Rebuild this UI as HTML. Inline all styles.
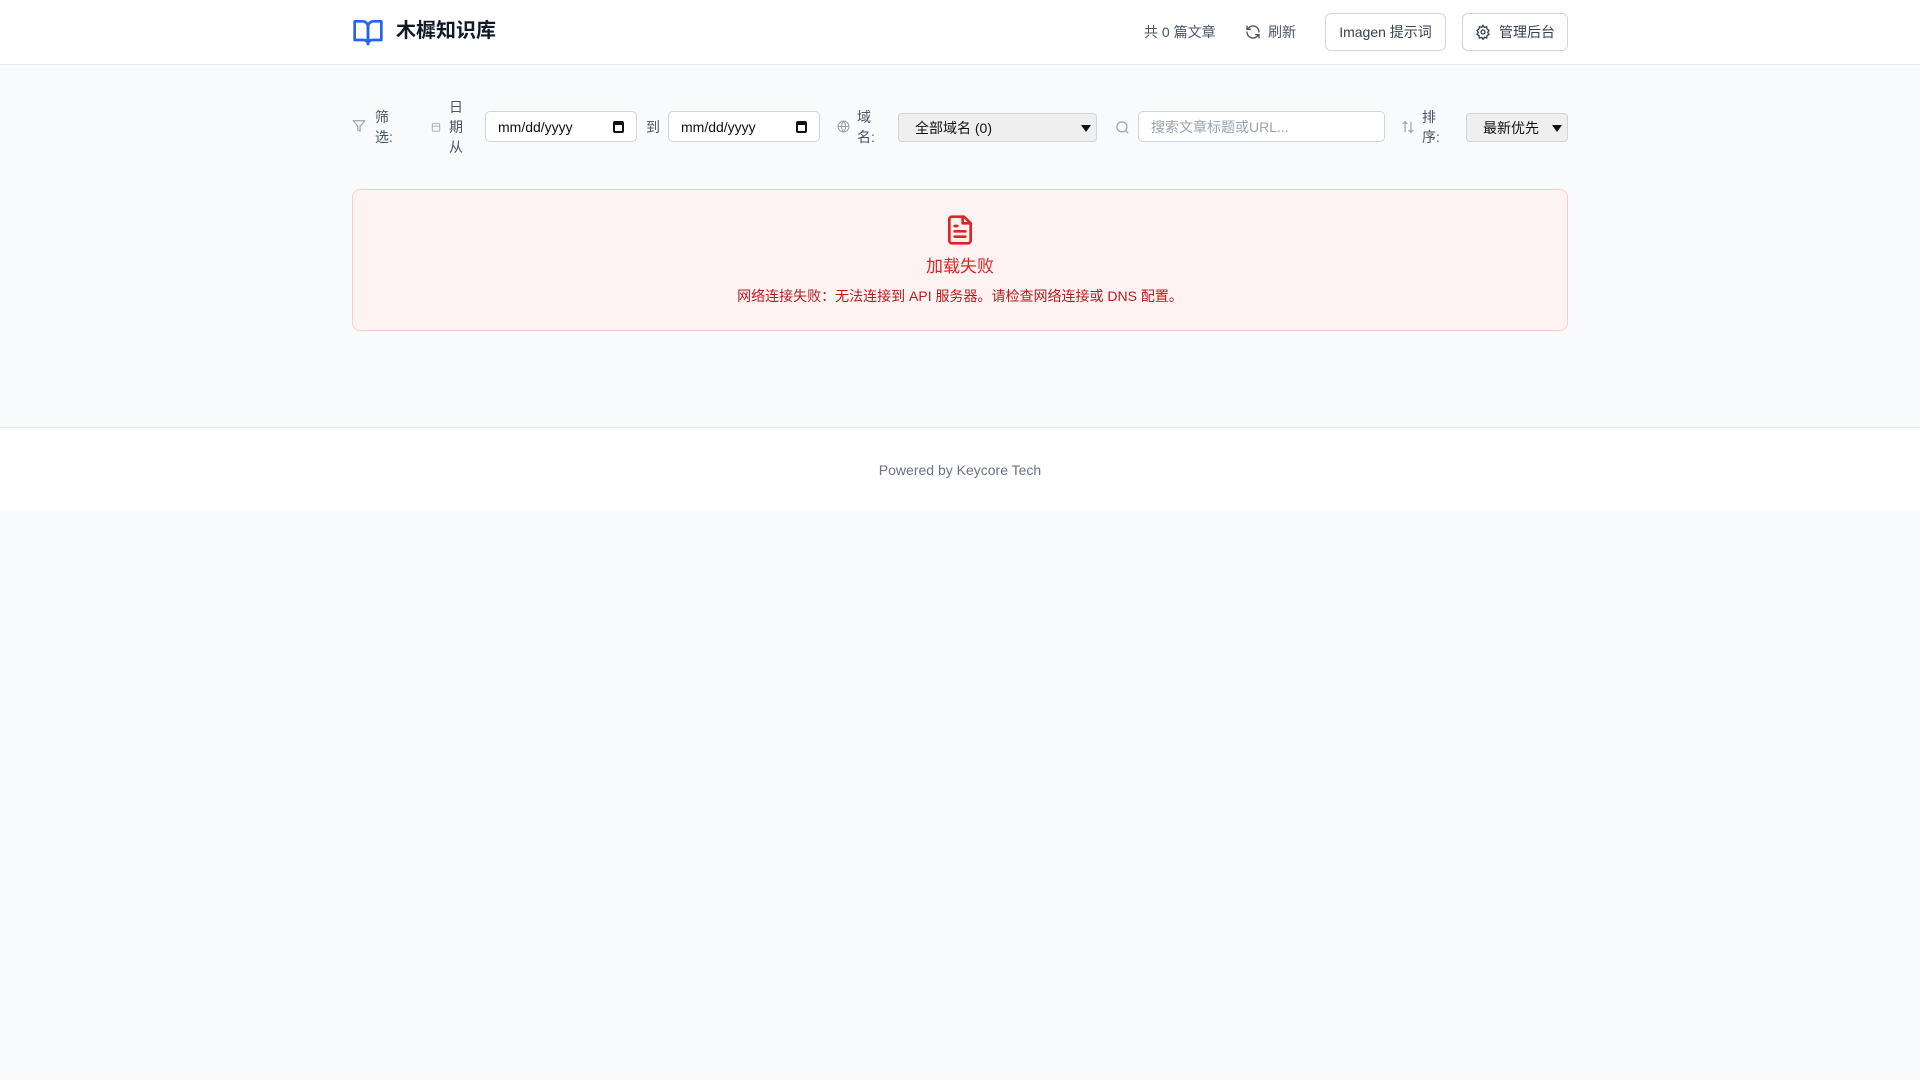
<!DOCTYPE html>
<html><head><meta charset="utf-8"><style>
*{box-sizing:border-box;margin:0;padding:0}
body{width:1920px;height:1080px;background:#f9fafb;font-family:"Liberation Sans","Noto Sans CJK SC",sans-serif;color:#374151;font-size:14px;position:relative;overflow:hidden}
.abs{position:absolute}
header{position:absolute;left:0;top:0;width:1920px;height:65px;background:#fff;border-bottom:1px solid #e5e7eb}
.btn{position:absolute;top:13px;height:38px;border:1px solid #d1d5db;border-radius:6px;background:#fff;display:flex;align-items:center;justify-content:center;font-size:14px;color:#374151;gap:8px}
.lbl{position:absolute;font-size:14px;line-height:20px;color:#4b5563}
.inp{position:absolute;height:31px;border:1px solid #d1d5db;border-radius:5px;background:#fff;font-size:14px;color:#111;display:flex;align-items:center;padding:0 12px}
.sel{position:absolute;height:29px;border:1px solid #d1d5db;border-radius:4px;background:#efefef;font-size:14px;color:#111;display:flex;align-items:center;padding:0 16px}
.sel:after{content:"";position:absolute;right:5px;top:11px;border-left:5px solid transparent;border-right:5px solid transparent;border-top:7px solid #111}
</style></head><body>
<header>
<svg class="abs" style="left:352px;top:16px" width="32" height="32" viewBox="0 0 24 24" fill="none" stroke="#2563eb" stroke-width="2" stroke-linecap="round" stroke-linejoin="round"><path d="M2 4h6a4 4 0 0 1 4 4v13a3 3 0 0 0-3-3H2z"/><path d="M22 4h-6a4 4 0 0 0-4 4v13a3 3 0 0 1 3-3h7z"/></svg>
<div class="abs" style="left:396px;top:17px;font-size:20px;font-weight:bold;color:#111827;line-height:28px">木樨知识库</div>
<div class="abs" style="left:1144px;top:22px;line-height:20px;color:#4b5563">共 0 篇文章</div>
<svg class="abs" style="left:1245px;top:24px" width="16" height="16" viewBox="0 0 24 24" fill="none" stroke="#4b5563" stroke-width="2" stroke-linecap="round" stroke-linejoin="round"><path d="M21 12a9 9 0 0 0-15-6.7L3 8"/><path d="M3 3v5h5"/><path d="M3 12a9 9 0 0 0 15 6.7L21 16"/><path d="M16 16h5v5"/></svg>
<div class="abs" style="left:1268px;top:22px;line-height:20px;color:#4b5563">刷新</div>
<div class="btn" style="left:1325px;width:121px">Imagen 提示词</div>
<div class="btn" style="left:1462px;width:106px"><svg width="16" height="16" viewBox="0 0 24 24" fill="none" stroke="#374151" stroke-width="2"><circle cx="12" cy="12" r="3"/><path d="M12 2l2 3 3.5-1 .5 3.5 3 2-2 3 2 3-3 2-.5 3.5-3.5-1-2 3-2-3-3.5 1-.5-3.5-3-2 2-3-2-3 3-2 .5-3.5 3.5 1z"/></svg>管理后台</div>
</header>
<svg class="abs" style="left:352px;top:119px" width="14" height="14" viewBox="0 0 24 24" fill="none" stroke="#9ca3af" stroke-width="2" stroke-linejoin="round"><path d="M22 3H2l8 9.5V19l4 2v-8.5z"/></svg>
<div class="lbl" style="left:375px;top:107px;width:20px">筛选:</div>
<svg class="abs" style="left:431px;top:122px" width="10" height="10" viewBox="0 0 24 24" fill="none" stroke="#9ca3af" stroke-width="2"><rect x="3" y="4" width="18" height="18" rx="2"/><path d="M3 10h18"/></svg>
<div class="lbl" style="left:449px;top:97px;width:16px">日期从</div>
<div class="inp" style="left:485px;top:111px;width:152px">mm/dd/yyyy<span style="position:absolute;right:12px;top:9px;width:11px;height:12px;border:2px solid #111;border-top-width:4px;border-radius:2px"></span></div>
<div class="lbl" style="left:646px;top:117px">到</div>
<div class="inp" style="left:668px;top:111px;width:152px">mm/dd/yyyy<span style="position:absolute;right:12px;top:9px;width:11px;height:12px;border:2px solid #111;border-top-width:4px;border-radius:2px"></span></div>
<svg class="abs" style="left:837px;top:120px" width="13" height="13" viewBox="0 0 24 24" fill="none" stroke="#9ca3af" stroke-width="2"><circle cx="12" cy="12" r="10"/><path d="M2 12h20M12 2a15 15 0 0 1 0 20M12 2a15 15 0 0 0 0 20"/></svg>
<div class="lbl" style="left:857px;top:107px;width:20px">域名:</div>
<div class="sel" style="left:898px;top:113px;width:199px">全部域名 (0)</div>
<svg class="abs" style="left:1115px;top:120px" width="15" height="15" viewBox="0 0 24 24" fill="none" stroke="#9ca3af" stroke-width="2"><circle cx="11" cy="11" r="8"/><path d="M21 21l-4.3-4.3"/></svg>
<div class="inp" style="left:1138px;top:111px;width:247px;color:#9ca3af">搜索文章标题或URL...</div>
<svg class="abs" style="left:1401px;top:120px" width="14" height="14" viewBox="0 0 24 24" fill="none" stroke="#9ca3af" stroke-width="2"><path d="M7 3v18M3 7l4-4 4 4M17 21V3M13 17l4 4 4-4"/></svg>
<div class="lbl" style="left:1422px;top:107px;width:20px">排序:</div>
<div class="sel" style="left:1466px;top:113px;width:102px;padding-left:16px">最新优先</div>
<div class="abs" style="left:352px;top:189px;width:1216px;height:142px;background:#fef2f2;border:1px solid #fecaca;border-radius:8px"></div>
<svg class="abs" style="left:944px;top:214px" width="32" height="32" viewBox="0 0 24 24" fill="none" stroke="#dc2626" stroke-width="2" stroke-linecap="round" stroke-linejoin="round"><path d="M15 2H6a2 2 0 0 0-2 2v16a2 2 0 0 0 2 2h12a2 2 0 0 0 2-2V7z"/><path d="M14 2v5h6"/><path d="M16 13H8M16 17H8M10 9H8"/></svg>
<div class="abs" style="left:0;width:1920px;text-align:center;top:255px;font-size:17px;line-height:24px;color:#dc2626">加载失败</div>
<div class="abs" style="left:0;width:1920px;text-align:center;top:286px;font-size:14px;line-height:20px;color:#b91c1c">网络连接失败：无法连接到 API 服务器。请检查网络连接或 DNS 配置。</div>
<div class="abs" style="left:0;top:427px;width:1920px;height:84px;background:#fff;border-top:1px solid #e5e7eb"></div>
<div class="abs" style="left:0;width:1920px;text-align:center;top:460px;font-size:14px;line-height:20px;color:#6b7280">Powered by Keycore Tech</div>
</body></html>
